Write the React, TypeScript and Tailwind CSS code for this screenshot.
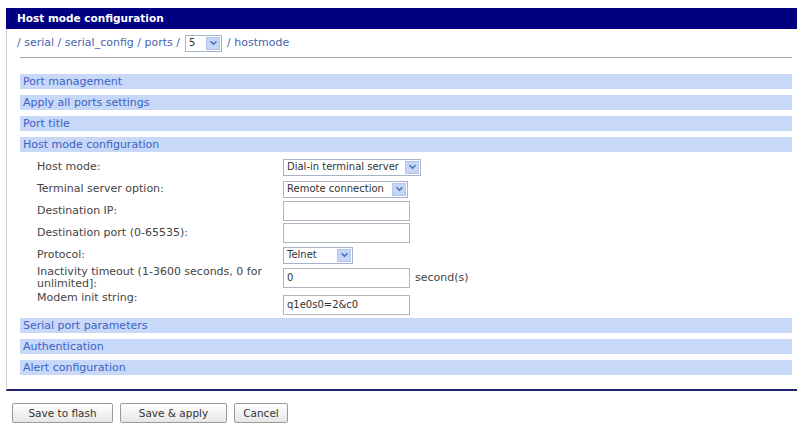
import React from "react";

function Chevron() {
  return (
    <svg width="9" height="6" viewBox="0 0 9 6" fill="none">
      <path d="M1.5 1.2l3 3 3-3" stroke="#4d6fb8" strokeWidth="1.6" />
    </svg>
  );
}

function FakeSelect({ value, width }: { value: string; width: string }) {
  return (
    <div
      className={`${width} h-[17px] border border-[#a7b4c8] bg-white flex items-center justify-between pl-[3px] pr-[1px] text-[#333] text-[10px]`}
    >
      <span className="leading-none whitespace-nowrap">{value}</span>
      <span className="w-[14px] h-[13px] bg-[#c5d5f6] border border-[#b3c6ee] flex items-center justify-center">
        <Chevron />
      </span>
    </div>
  );
}

function TextBox({ value = "" }: { value?: string }) {
  return (
    <div className="w-[127px] h-[20px] border border-[#aeb4bd] bg-white flex items-center pl-[3px] text-[#333] text-[10px] leading-none">
      {value}
    </div>
  );
}

function SectionBar({ title }: { title: string }) {
  return (
    <div className="h-[15px] bg-[#c7d8f8] text-[#3d62c4] pl-[3px] flex items-center leading-none">
      {title}
    </div>
  );
}

export default function App() {
  return (
    <div className="w-[799px] h-[426px] bg-white pt-[8px] pl-[6px] font-['DejaVu_Sans',sans-serif] text-[11px]">
      <div className="w-[791px]">
        {/* title bar */}
        <div className="h-[21px] bg-[#000080] text-white font-bold pl-[11px] flex items-center text-[10.5px]">
          Host mode configuration
        </div>

        <div className="border-l border-[#cfcfcf] border-b-2 border-b-[#22226e] pb-[14px]">
          {/* breadcrumb */}
          <div className="h-[28px] pl-[10px] flex items-center gap-[5px] text-[#4a64ad]">
            <span>/ serial / serial_config / ports /</span>
            <FakeSelect value="5" width="w-[37px]" />
            <span>/ hostmode</span>
          </div>
          <div className="ml-[13px] mr-[5px] border-t border-[#a3a3a3]" />

          <div className="ml-[13px] mr-[5px] mt-[16px]">
            <div className="flex flex-col gap-[6px]">
              <SectionBar title="Port management" />
              <SectionBar title="Apply all ports settings" />
              <SectionBar title="Port title" />
              <SectionBar title="Host mode configuration" />
            </div>

            {/* form */}
            <div className="pl-[17px] pt-[4px] pb-[3px] text-[#444]">
              <div className="h-[22px] flex items-center">
                <div className="w-[246px]">Host mode:</div>
                <FakeSelect value="Dial-in terminal server" width="w-[138px]" />
              </div>
              <div className="h-[22px] flex items-center">
                <div className="w-[246px]">Terminal server option:</div>
                <FakeSelect value="Remote connection" width="w-[125px]" />
              </div>
              <div className="h-[22px] flex items-center">
                <div className="w-[246px]">Destination IP:</div>
                <TextBox />
              </div>
              <div className="h-[22px] flex items-center">
                <div className="w-[246px]">Destination port (0-65535):</div>
                <TextBox />
              </div>
              <div className="h-[22px] flex items-center">
                <div className="w-[246px]">Protocol:</div>
                <FakeSelect value="Telnet" width="w-[70px]" />
              </div>
              <div className="h-[24px] flex items-center">
                <div className="w-[246px] leading-[12px] pr-[4px]">
                  Inactivity timeout (1-3600 seconds, 0 for unlimited]:
                </div>
                <TextBox value="0" />
                <span className="ml-[5px]">second(s)</span>
              </div>
              <div className="h-[25px] flex items-start">
                <div className="w-[246px] mt-[2px] leading-[12px]">Modem init string:</div>
                <div className="mt-[5px]">
                  <TextBox value="q1e0s0=2&c0" />
                </div>
              </div>
            </div>

            <div className="flex flex-col gap-[6px]">
              <SectionBar title="Serial port parameters" />
              <SectionBar title="Authentication" />
              <SectionBar title="Alert configuration" />
            </div>
          </div>
        </div>

        {/* buttons */}
        <div className="mt-[12px] ml-[6px] flex gap-[7px] text-[#333] text-[10.5px]">
          <button className="w-[101px] h-[20px] border border-[#9a9a9a] rounded-[2px] bg-gradient-to-b from-white to-[#e6e6e6] leading-none">
            Save to flash
          </button>
          <button className="w-[107px] h-[20px] border border-[#9a9a9a] rounded-[2px] bg-gradient-to-b from-white to-[#e6e6e6] leading-none">
            Save &amp; apply
          </button>
          <button className="w-[54px] h-[20px] border border-[#9a9a9a] rounded-[2px] bg-gradient-to-b from-white to-[#e6e6e6] leading-none">
            Cancel
          </button>
        </div>
      </div>
    </div>
  );
}
